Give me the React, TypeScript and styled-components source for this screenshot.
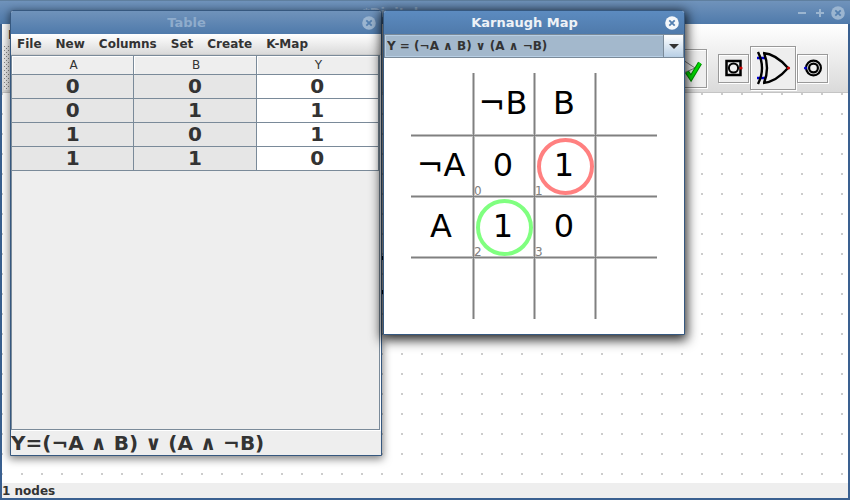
import React from "react";
import styled, { createGlobalStyle, css } from "styled-components";

const Global = createGlobalStyle`
  * { box-sizing: border-box; }
  body { margin: 0; font-family: "DejaVu Sans", sans-serif; font-weight: 700; font-size: 12px; color: #333; overflow: hidden; }
  button, select { font: inherit; color: inherit; }
`;

const Desktop = styled.div`
  position: relative;
  height: 100vh;
`;

const MainWindow = styled.main`
  height: 100%;
  display: flex;
  flex-direction: column;
  border: 2px solid #3a6090;
  border-top: 0;
  background: #eee;
`;

const TitleBar = styled.header<{ $active?: boolean; $main?: boolean }>`
  flex: none;
  height: ${(p) => (p.$main ? 24 : 23)}px;
  display: flex;
  align-items: center;
  gap: 4px;
  padding-right: 5px;
  font-size: 13px;
  color: ${(p) => (p.$active ? "#eef2f7" : "#8faccc")};
  background: ${(p) =>
    p.$active
      ? "linear-gradient(#5c8bc0, #4f7aab)"
      : "linear-gradient(#7093bb, #4f7aab)"};
  ${(p) => p.$main && css`
    border-top: 1px solid #5f7f9f;
    margin: 0 -2px;
  `}
`;

const Title = styled.h1`
  flex: 1;
  margin: 0;
  padding-left: 4px;
  font-size: 13px;
  line-height: 16px;
  text-align: center;
`;

const WindowButton = styled.button`
  display: flex;
  width: 14px;
  height: 14px;
  padding: 0;
  border: 0;
  background: none;
`;

const MainHead = styled.div`
  flex: none;
  height: 69px;
  background: linear-gradient(#fff, #dadada);
  border-bottom: 1px solid #c4c4c4;
`;

const MenuBar = styled.nav<{ $sub?: boolean }>`
  display: flex;
  align-items: center;
  gap: 14px;
  height: 22px;
  padding: 0 6px;
  ${(p) => p.$sub && css`
    flex: none;
    height: 21px;
    background: linear-gradient(#fff, #dadada);
    border-bottom: 1px solid #ccc;
  `}
`;

const MenuItem = styled.button`
  padding: 0;
  border: 0;
  background: none;
  line-height: 16px;
`;

const Toolbar = styled.div`
  display: flex;
  align-items: center;
  height: 44px;
  padding-left: 2px;
`;

const Grip = styled.div`
  width: 10px;
  height: 44px;
  background-color: #eee;
  background-image:
    linear-gradient(#999, #999), linear-gradient(#999, #999);
  background:
    conic-gradient(from 0deg at 1px 1px, transparent 0 270deg, #888 0) 0 0 / 4px 4px,
    conic-gradient(from 0deg at 1px 1px, transparent 0 270deg, #888 0) 2px 2px / 4px 4px,
    #eee;
`;

const ToolGroup = styled.div<{ $gap: number }>`
  display: flex;
  align-items: center;
  gap: 1px;
  margin-left: ${(p) => p.$gap}px;
`;

const ToolButton = styled.button<{ $w: number; $h: number }>`
  display: flex;
  align-items: center;
  justify-content: center;
  width: ${(p) => p.$w}px;
  height: ${(p) => p.$h}px;
  padding: 0;
  background: #eee;
  border: 1px solid #999;
  box-shadow: 1px 1px #fff, inset 1px 1px #fff;
`;

const Canvas = styled.section`
  position: relative;
  flex: 1;
  min-height: 0;
  background: conic-gradient(from 0deg at 2px 2px, transparent 0 270deg, #ccc 0) -1px 0 / 20px 20px #fff;
`;

const Wires = styled.svg`
  position: absolute;
  left: 380px;
  top: 160px;
`;

const Status = styled.footer`
  flex: none;
  height: 15px;
  line-height: 16px;
`;

const SubWindow = styled.section<{ $x: number; $w: number; $h: number; $active?: boolean }>`
  position: absolute;
  left: ${(p) => p.$x}px;
  top: 10px;
  width: ${(p) => p.$w}px;
  height: ${(p) => p.$h}px;
  display: flex;
  flex-direction: column;
  border: 1px solid #36587f;
  border-radius: 3px 3px 0 0;
  overflow: hidden;
  background: ${(p) => (p.$active ? "#fff" : "#eee")};
  box-shadow: ${(p) => (p.$active ? "0 3px 12px 2px rgba(0,0,0,.85)" : "0 2px 8px 1px rgba(0,0,0,.5)")};
`;

const ScrollPane = styled.div`
  flex: 1;
  margin-right: 1px;
  border: 1px solid #7a8a99;
  box-shadow: 1px 1px #fff;
`;

const TruthTable = styled.table`
  width: 100%;
  table-layout: fixed;
  border-collapse: separate;
  border-spacing: 0;
  text-align: center;
  th, td {
    padding: 0;
    border-right: 1px solid #7a8a99;
    border-bottom: 1px solid #7a8a99;
  }
  th {
    height: 19px;
    font-weight: 400;
    line-height: 16px;
    box-shadow: inset 1px 1px #fff;
    padding-left: 2px;
  }
  td {
    height: 24px;
    padding-bottom: 2px;
    background: #e6e6e6;
    font-size: 20px;
    line-height: 20px;
  }
  td:last-child { background: #fff; }
`;

const Formula = styled.output`
  flex: none;
  height: 25px;
  font-size: 20px;
  line-height: 26px;
  white-space: nowrap;
`;

const Combo = styled.div`
  flex: none;
  display: grid;
  grid-template-columns: 1fr 20px;
  height: 24px;
  border: 1px solid #7a8a99;
`;

const Select = styled.select`
  grid-area: 1 / 1 / 2 / 3;
  appearance: none;
  min-width: 0;
  padding: 0 20px 0 1px;
  border: 1px solid #b8cfe5;
  border-radius: 0;
  background: #a3b8cc;
`;

const Arrow = styled.span`
  grid-area: 1 / 2;
  display: flex;
  align-items: center;
  justify-content: center;
  pointer-events: none;
  border-left: 1px solid #7a8a99;
  background: linear-gradient(#fff, #b8cfe5);
  z-index: 1;
`;

const MapArea = styled.div`
  padding: 15px 0 0 27px;
`;

const Map = styled.table`
  border-collapse: separate;
  border-spacing: 0;
  table-layout: fixed;
  width: 246px;
  color: #000;
  text-align: center;
`;

const MapCell = styled.td<{ $edgeX: boolean; $edgeY: boolean; $wide: boolean; $tall: boolean }>`
  position: relative;
  padding: 0 2px 2px 0;
  width: ${(p) => (p.$wide ? 63 : 61)}px;
  height: ${(p) => (p.$tall ? 63 : 61)}px;
  font-size: 32px;
  font-weight: 400;
  line-height: 36px;
  border-right: ${(p) => (p.$edgeX ? 0 : 1)}px solid #808080;
  border-bottom: ${(p) => (p.$edgeY ? 0 : 1)}px solid #808080;
  box-shadow:
    ${(p) => (p.$edgeX ? "0 0 #bfbfbf" : "1px 0 #bfbfbf, inset -1px 0 #bfbfbf")},
    ${(p) => (p.$edgeY ? "0 0 #bfbfbf" : "0 1px #bfbfbf, inset 0 -1px #bfbfbf")};
`;

const Index = styled.small`
  position: absolute;
  left: 0;
  bottom: -2px;
  font-size: 12px;
  line-height: 14px;
  color: #808080;
`;

const Ring = styled.i<{ $color: string }>`
  position: absolute;
  left: 2px;
  top: 2px;
  width: 57px;
  height: 57px;
  border: 4px solid ${(p) => p.$color};
  border-radius: 50%;
`;

const CloseIcon = ({ active }: { active?: boolean }) => (
  <svg width="14" height="14" viewBox="0 0 14 14">
    <circle cx="7" cy="7" r="6.8" fill={active ? "#f4f7fa" : "#9bb5d0"} />
    <path d="M4.3 4.3l5.4 5.4M9.7 4.3l-5.4 5.4" stroke="#5580b0" strokeWidth="1.8" />
  </svg>
);

const rows = [[0, 0, 0], [0, 1, 1], [1, 0, 1], [1, 1, 0]];
const menus = ["File", "New", "Columns", "Set", "Create", "K-Map"];

type Cell = { text?: string; index?: number; ring?: string };
const kmap: Cell[][] = [
  [{}, { text: "¬B" }, { text: "B" }, {}],
  [{ text: "¬A" }, { text: "0", index: 0 }, { text: "1", index: 1, ring: "#ff8080" }, {}],
  [{ text: "A" }, { text: "1", index: 2, ring: "#80ff80" }, { text: "0", index: 3 }, {}],
  [{}, {}, {}, {}],
];

const MainTitle = styled(Title)`
  padding: 0 10px 0 0;
`;

export default function App() {
  return (
    <Desktop>
      <Global />
      <MainWindow>
        <TitleBar $main>
          <MainTitle as="h2">*Digital</MainTitle>
          <WindowButton aria-label="Minimize">
            <svg width="14" height="14"><path d="M3 7h8" stroke="#9bb5d0" strokeWidth="2" /></svg>
          </WindowButton>
          <WindowButton aria-label="Maximize">
            <svg width="14" height="14"><path d="M3 7h8M7 3v8" stroke="#9bb5d0" strokeWidth="2" /></svg>
          </WindowButton>
          <WindowButton aria-label="Close"><CloseIcon /></WindowButton>
        </TitleBar>
        <MainHead>
          <MenuBar><MenuItem aria-label="File">F</MenuItem></MenuBar>
          <Toolbar>
            <Grip />
            <ToolGroup $gap={653}>
              <ToolButton $w={40} $h={39} aria-label="Run tests">
                <svg width="36" height="36" viewBox="0 0 36 36" fill="none">
                  <path d="M8 6l18 12L8 26z" stroke="#777" />
                  <path d="M18 22l4 6L31 13" stroke="#080" strokeWidth="4.5" />
                  <path d="M18 22l4 6L31 13" stroke="#0d0" strokeWidth="2.5" />
                </svg>
              </ToolButton>
            </ToolGroup>
            <ToolGroup $gap={11}>
              <ToolButton $w={31} $h={29} aria-label="Input">
                <svg width="20" height="20" viewBox="0 0 20 20" fill="none" stroke="#000" strokeWidth="2.5">
                  <path d="M2.5 3h14v14h-14z" /><circle cx="9.5" cy="10" r="4.6" strokeWidth="2" />
                  <circle cx="17" cy="10" r="1.6" fill="#c00" stroke="none" />
                </svg>
              </ToolButton>
              <ToolButton $w={46} $h={44} aria-label="XOR gate">
                <svg width="36" height="34" viewBox="0 0 36 34" fill="none" stroke="#000" strokeWidth="2.4">
                  <path d="M2 7h9M2 27h9" stroke="#00c" />
                  <path d="M3 1q8 16 0 32M9 2q6 15 0 30M8 2Q21 3 33 17Q21 31 8 32" />
                  <circle cx="33.5" cy="17" r="1.6" fill="#c00" stroke="none" />
                </svg>
              </ToolButton>
              <ToolButton $w={31} $h={29} aria-label="Output">
                <svg width="20" height="20" viewBox="0 0 20 20" fill="none" stroke="#000" strokeWidth="2.2">
                  <circle cx="10.5" cy="10" r="7.4" /><circle cx="10.5" cy="10" r="4.4" />
                  <circle cx="2.5" cy="10" r="1.6" fill="#00c" stroke="none" />
                </svg>
              </ToolButton>
            </ToolGroup>
          </Toolbar>
        </MainHead>
        <Canvas>
          <Wires width="40" height="44" aria-hidden="true">
            <path d="M0 5h30M0 39h30" stroke="#000" strokeWidth="4" />
          </Wires>
        </Canvas>
        <Status>1 nodes</Status>
      </MainWindow>

      <SubWindow $x={10} $w={372} $h={446}>
        <TitleBar><Title>Table</Title><WindowButton aria-label="Close"><CloseIcon /></WindowButton></TitleBar>
        <MenuBar $sub>{menus.map((m) => <MenuItem key={m}>{m}</MenuItem>)}</MenuBar>
        <ScrollPane>
          <TruthTable>
            <thead><tr>{["A", "B", "Y"].map((h) => <th key={h} scope="col">{h}</th>)}</tr></thead>
            <tbody>{rows.map((r, i) => <tr key={i}>{r.map((v, j) => <td key={j}>{v}</td>)}</tr>)}</tbody>
          </TruthTable>
        </ScrollPane>
        <Formula>Y=(¬A ∧ B) ∨ (A ∧ ¬B)</Formula>
      </SubWindow>

      <SubWindow $x={383} $w={302} $h={325} $active>
        <TitleBar $active><Title>Karnaugh Map</Title><WindowButton aria-label="Close"><CloseIcon active /></WindowButton></TitleBar>
        <Combo>
          <Select aria-label="Expression"><option>Y = (¬A ∧ B) ∨ (A ∧ ¬B)</option></Select>
          <Arrow><svg width="10" height="5"><path d="M0 0h10L5 5z" fill="#333" /></svg></Arrow>
        </Combo>
        <MapArea>
          <Map>
            <tbody>
              {kmap.map((r, y) => (
                <tr key={y}>
                  {r.map((c, x) => (
                    <MapCell key={x} $edgeX={x === 3} $edgeY={y === 3} $wide={x === 0} $tall={y === 0}>
                      {c.text}
                      {c.index !== undefined && <Index>{c.index}</Index>}
                      {c.ring && <Ring $color={c.ring} />}
                    </MapCell>
                  ))}
                </tr>
              ))}
            </tbody>
          </Map>
        </MapArea>
      </SubWindow>
    </Desktop>
  );
}
